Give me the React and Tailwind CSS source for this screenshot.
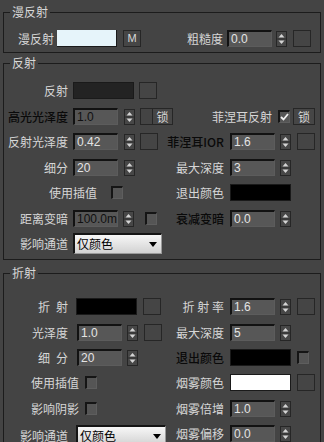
import React from "react";

const CJK = "font-['Noto_Sans_CJK_SC','Noto_Sans',sans-serif]";
const NUM = "font-['Liberation_Sans','Noto_Sans_CJK_SC',sans-serif]";

function Label({ w, dim, children }) {
  return (
    <div
      className={`${w} shrink-0 whitespace-nowrap text-right text-[12px] leading-[14px] ${CJK} ${
        dim ? "font-medium text-[#0a0a0a]" : "text-[#d6d6d6]"
      }`}
    >
      {children}
    </div>
  );
}

function Input({ value, dim, cls = "" }) {
  return (
    <div
      className={`${cls} h-[17px] w-[45px] shrink-0 overflow-hidden whitespace-nowrap border-b border-l-2 border-r border-t-2 border-b-[#5c5c5c] border-l-[#121212] border-r-[#5c5c5c] border-t-[#121212] bg-[#575757] pl-[2px] text-[12px] leading-[14px] ${NUM} ${
        dim ? "text-[#101010]" : "text-[#e4e4e4]"
      }`}
    >
      {value}
    </div>
  );
}

function Spinner({ cls = "" }) {
  return (
    <svg className={`${cls} shrink-0`} width="11" height="16" viewBox="0 0 11 16">
      <rect x="0.5" y="0.5" width="10" height="15" fill="#474747" stroke="#262626" />
      <path d="M2.5 6.5 L5.5 3 L8.5 6.5Z" fill="#d4d4d4" />
      <line x1="1" y1="8" x2="10" y2="8" stroke="#2c2c2c" />
      <path d="M2.5 9.5 L5.5 13 L8.5 9.5Z" fill="#d4d4d4" />
    </svg>
  );
}

function Square({ cls = "" }) {
  return <div className={`${cls} h-[17px] w-[18px] shrink-0 border border-[#262626] bg-[#454545]`} />;
}

function Swatch({ color, cls = "" }) {
  return <div className={`${cls} h-[17px] w-[61px] shrink-0 border border-[#1a1a1a] ${color}`} />;
}

function Check({ cls = "", checked }) {
  return (
    <div
      className={`${cls} flex h-[13px] w-[12px] shrink-0 items-center justify-center border-b border-l-2 border-r border-t-2 border-b-[#5e5e5e] border-l-[#151515] border-r-[#5e5e5e] border-t-[#151515] bg-[#555555]`}
    >
      {checked && (
        <svg width="9" height="8" viewBox="0 0 9 8">
          <path d="M1 4 L3.5 6.5 L8 1" fill="none" stroke="#f0f0f0" strokeWidth="1.8" />
        </svg>
      )}
    </div>
  );
}

function LockBtn({ cls = "" }) {
  return (
    <div
      className={`${cls} flex h-[17px] shrink-0 items-center justify-center border border-[#262626] bg-[#464646] text-[12px] leading-[14px] text-[#d6d6d6] ${CJK}`}
    >
      锁
    </div>
  );
}

function Dropdown({ cls = "" }) {
  return (
    <div
      className={`${cls} flex h-[21px] shrink-0 items-center justify-between border-l-2 border-t-2 border-b border-r border-l-[#151515] border-t-[#151515] border-b-[#9a9a9a] border-r-[#9a9a9a] bg-gradient-to-b from-[#f7f7f7] to-[#d2d2d2] pl-[2px] pr-[4px] text-[12px] leading-[14px] text-[#000] ${CJK}`}
    >
      <span>仅颜色</span>
      <svg width="8" height="5" viewBox="0 0 8 5">
        <path d="M0 0 L8 0 L4 5Z" fill="#000" />
      </svg>
    </div>
  );
}

function Group({ title, cls, children }) {
  return (
    <div className={`relative mx-[3px] border border-[#1c1c1c] ${cls}`}>
      <div
        className={`absolute -top-[8px] left-[6px] bg-[#444444] px-[2px] text-[12px] leading-[14px] text-[#d8d8d8] ${CJK}`}
      >
        {title}
      </div>
      {children}
    </div>
  );
}

function Row({ h, left, right }) {
  return (
    <div className={`flex ${h}`}>
      <div className="flex h-[17px] w-[158px] shrink-0 items-center">{left}</div>
      <div className="flex h-[17px] items-center">{right}</div>
    </div>
  );
}

export default function App() {
  return (
    <div className="h-[442px] w-[324px] overflow-hidden bg-[#444444] pt-[12px]">
      <Group title="漫反射" cls="pt-[17px] pb-[5px]">
        <Row
          h="h-[17px]"
          left={
            <>
              <Label w="w-[50px]">漫反射</Label>
              <div className="ml-[3px] h-[17px] w-[60px] shrink-0 border-b border-r border-b-[#1a1a1a] border-r-[#1a1a1a] bg-[#e6f4fa]" />
              <div
                className={`ml-[6px] flex h-[17px] w-[18px] shrink-0 items-center justify-center border border-[#262626] bg-[#464646] text-[11px] text-[#d8d8d8] ${NUM}`}
              >
                M
              </div>
            </>
          }
          right={
            <>
              <Label w="w-[61px]">粗糙度</Label>
              <Input cls="ml-[4px]" value="0.0" />
              <Spinner cls="ml-[4px]" />
              <Square cls="ml-[6px]" />
            </>
          }
        />
      </Group>

      <Group title="反射" cls="mt-[10px] pt-[18px] pb-[5px]">
        <Row
          h="h-[26px]"
          left={
            <>
              <Label w="w-[64px]">反射</Label>
              <Swatch cls="ml-[5px]" color="bg-[#232323]" />
              <Square cls="ml-[5px]" />
            </>
          }
        />
        <div className="flex h-[25px] pr-[5px]">
          <div className="flex h-[17px] items-center">
            <Label w="w-[64px]" dim>
              高光光泽度
            </Label>
            <Input cls="ml-[5px]" value="1.0" dim />
            <Spinner cls="ml-[6px]" />
            <div className="ml-[5px] h-[17px] w-[12px] shrink-0 border-b border-l border-t border-[#262626]" />
            <LockBtn cls="w-[21px]" />
          </div>
          <div className="ml-auto flex h-[17px] items-center">
            <Label w="w-auto">菲涅耳反射</Label>
            <Check cls="ml-[6px]" checked />
            <LockBtn cls="ml-[3px] w-[22px]" />
          </div>
        </div>
        <Row
          h="h-[26px]"
          left={
            <>
              <Label w="w-[64px]">反射光泽度</Label>
              <Input cls="ml-[5px]" value="0.42" />
              <Spinner cls="ml-[6px]" />
              <Square cls="ml-[5px]" />
            </>
          }
          right={
            <>
              <Label w="w-[62px]" dim>
                菲涅耳IOR
              </Label>
              <Input cls="ml-[6px]" value="1.6" />
              <Spinner cls="ml-[5px]" />
              <Square cls="ml-[6px]" />
            </>
          }
        />
        <Row
          h="h-[25px]"
          left={
            <>
              <Label w="w-[64px]">细分</Label>
              <Input cls="ml-[5px]" value="20" />
              <Spinner cls="ml-[6px]" />
            </>
          }
          right={
            <>
              <Label w="w-[62px]">最大深度</Label>
              <Input cls="ml-[6px]" value="3" />
              <Spinner cls="ml-[5px]" />
            </>
          }
        />
        <Row
          h="h-[26px]"
          left={
            <>
              <Label w="w-[93px]">使用插值</Label>
              <Check cls="ml-[14px]" />
            </>
          }
          right={
            <>
              <Label w="w-[62px]">退出颜色</Label>
              <Swatch cls="ml-[6px]" color="bg-[#000000]" />
            </>
          }
        />
        <Row
          h="h-[23px]"
          left={
            <>
              <Label w="w-[64px]">距离变暗</Label>
              <Input cls="ml-[5px]" value="100.0mm" dim />
              <Spinner cls="ml-[5px]" />
              <Check cls="ml-[11px]" />
            </>
          }
          right={
            <>
              <Label w="w-[62px]" dim>
                衰减变暗
              </Label>
              <Input cls="ml-[6px]" value="0.0" />
              <Spinner cls="ml-[5px]" />
            </>
          }
        />
        <div className="flex h-[21px] items-center">
          <Label w="w-[64px]">影响通道</Label>
          <Dropdown cls="ml-[5px] w-[89px]" />
        </div>
      </Group>

      <Group title="折射" cls="mt-[13px] pt-[24px] pb-[20px]">
        <Row
          h="h-[26px]"
          left={
            <>
              <Label w="w-[64px]">折{"\u2002"}射</Label>
              <Swatch cls="ml-[8px]" color="bg-[#000000]" />
              <Square cls="ml-[6px]" />
            </>
          }
          right={
            <>
              <Label w="w-[62px]">折 射 率</Label>
              <Input cls="ml-[6px]" value="1.6" />
              <Spinner cls="ml-[5px]" />
              <Square cls="ml-[6px]" />
            </>
          }
        />
        <Row
          h="h-[25px]"
          left={
            <>
              <Label w="w-[64px]">光泽度</Label>
              <Input cls="ml-[9px]" value="1.0" />
              <Spinner cls="ml-[5px]" />
              <Square cls="ml-[6px]" />
            </>
          }
          right={
            <>
              <Label w="w-[62px]">最大深度</Label>
              <Input cls="ml-[6px]" value="5" />
              <Spinner cls="ml-[5px]" />
            </>
          }
        />
        <Row
          h="h-[25px]"
          left={
            <>
              <Label w="w-[64px]">细{"\u2002"}分</Label>
              <Input cls="ml-[9px]" value="20" />
              <Spinner cls="ml-[5px]" />
            </>
          }
          right={
            <>
              <Label w="w-[62px]" dim>
                退出颜色
              </Label>
              <Swatch cls="ml-[6px]" color="bg-[#000000]" />
              <Check cls="ml-[6px]" />
            </>
          }
        />
        <Row
          h="h-[26px]"
          left={
            <>
              <Label w="w-[75px]">使用插值</Label>
              <Check cls="ml-[6px]" />
            </>
          }
          right={
            <>
              <Label w="w-[62px]">烟雾颜色</Label>
              <Swatch cls="ml-[6px]" color="bg-[#ffffff]" />
              <Square cls="ml-[6px]" />
            </>
          }
        />
        <Row
          h="h-[25px]"
          left={
            <>
              <Label w="w-[75px]">影响阴影</Label>
              <Check cls="ml-[6px]" />
            </>
          }
          right={
            <>
              <Label w="w-[62px]">烟雾倍增</Label>
              <Input cls="ml-[6px]" value="1.0" />
              <Spinner cls="ml-[5px]" />
            </>
          }
        />
        <div className="flex h-[21px]">
          <div className="flex w-[158px] shrink-0 items-center">
            <Label w="w-[64px]">影响通道</Label>
            <Dropdown cls="ml-[8px] w-[90px]" />
          </div>
          <div className="flex h-[17px] items-center">
            <Label w="w-[62px]">烟雾偏移</Label>
            <Input cls="ml-[6px]" value="0.0" />
            <Spinner cls="ml-[5px]" />
          </div>
        </div>
      </Group>
    </div>
  );
}
